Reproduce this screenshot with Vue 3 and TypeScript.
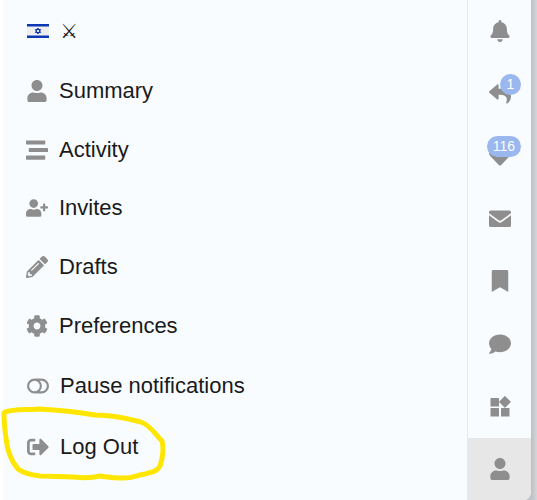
<script setup lang="ts">
interface IconShape {
  box: string
  d: string
}

interface MenuItem {
  label: string
  icon: string
}

interface RailItem {
  label: string
  icon: string
  badge?: string
  active?: boolean
}

const icons: Record<string, IconShape> = {
  user: {
    box: '-32 0 512 512',
    d: 'M224 256c70.7 0 128-57.3 128-128S294.7 0 224 0 96 57.3 96 128s57.3 128 128 128zm89.6 32h-16.7c-22.2 10.2-46.9 16-72.9 16s-50.6-5.8-72.9-16h-16.7C60.2 288 0 348.2 0 422.4V464c0 26.5 21.5 48 48 48h352c26.5 0 48-21.5 48-48v-41.6c0-74.2-60.2-134.4-134.4-134.4z',
  },
  stream: {
    box: '0 0 512 512',
    d: 'M16 128h416c8.8 0 16-7.2 16-16V48c0-8.8-7.2-16-16-16H16C7.2 32 0 39.2 0 48v64c0 8.8 7.2 16 16 16zm480 80H80c-8.8 0-16 7.2-16 16v64c0 8.8 7.2 16 16 16h416c8.8 0 16-7.2 16-16v-64c0-8.8-7.2-16-16-16zm-64 176H16c-8.8 0-16 7.2-16 16v64c0 8.8 7.2 16 16 16h416c8.8 0 16-7.2 16-16v-64c0-8.8-7.2-16-16-16z',
  },
  invite: {
    box: '0 -64 640 640',
    d: 'M624 208h-64v-64c0-8.8-7.2-16-16-16h-32c-8.8 0-16 7.2-16 16v64h-64c-8.8 0-16 7.2-16 16v32c0 8.8 7.2 16 16 16h64v64c0 8.8 7.2 16 16 16h32c8.8 0 16-7.2 16-16v-64h64c8.8 0 16-7.2 16-16v-32c0-8.8-7.2-16-16-16zM224 256c70.7 0 128-57.3 128-128S294.7 0 224 0 96 57.3 96 128s57.3 128 128 128zm89.6 32h-16.7c-22.2 10.2-46.9 16-72.9 16s-50.6-5.8-72.9-16h-16.7C60.2 288 0 348.2 0 422.4V464c0 26.5 21.5 48 48 48h352c26.5 0 48-21.5 48-48v-41.6c0-74.2-60.2-134.4-134.4-134.4z',
  },
  pencil: {
    box: '0 0 512 512',
    d: 'M497.9 142.1l-46.1 46.1c-4.7 4.7-12.3 4.7-17 0l-111-111c-4.7-4.7-4.7-12.3 0-17l46.1-46.1c18.7-18.7 49.1-18.7 67.9 0l60.1 60.1c18.8 18.7 18.8 49.1 0 67.9zM284.2 99.8L21.6 362.4.4 483.9c-2.9 16.4 11.4 30.6 27.8 27.8l121.5-21.3 262.6-262.6c4.7-4.7 4.7-12.3 0-17l-111-111c-4.8-4.7-12.4-4.7-17.1 0zM124.1 339.9c-5.5-5.5-5.5-14.3 0-19.8l154-154c5.5-5.5 14.3-5.5 19.8 0s5.5 14.3 0 19.8l-154 154c-5.5 5.5-14.3 5.5-19.8 0zM88 424h48v36.3l-64.5 11.3-31.1-31.1L51.7 376H88v48z',
  },
  cog: {
    box: '0 0 512 512',
    d: 'M487.4 315.7l-42.6-24.6c4.3-23.2 4.3-47 0-70.2l42.6-24.6c4.9-2.8 7.1-8.6 5.5-14-11.1-35.6-30-67.8-54.7-94.6-3.8-4.1-10-5.1-14.8-2.3L380.8 110c-17.9-15.4-38.5-27.3-60.8-35.1V25.8c0-5.6-3.9-10.5-9.4-11.7-36.7-8.2-74.3-7.8-109.2 0-5.5 1.2-9.4 6.1-9.4 11.7V75c-22.2 7.9-42.8 19.8-60.8 35.1L88.7 85.5c-4.9-2.8-11-1.9-14.8 2.3-24.7 26.7-43.6 58.9-54.7 94.6-1.7 5.4.6 11.2 5.5 14L67.3 221c-4.3 23.2-4.3 47 0 70.2l-42.6 24.6c-4.9 2.8-7.1 8.6-5.5 14 11.1 35.6 30 67.8 54.7 94.6 3.8 4.1 10 5.1 14.8 2.3l42.6-24.6c17.9 15.4 38.5 27.3 60.8 35.1v49.2c0 5.6 3.9 10.5 9.4 11.7 36.7 8.2 74.3 7.8 109.2 0 5.5-1.2 9.4-6.1 9.4-11.7v-49.2c22.2-7.9 42.8-19.8 60.8-35.1l42.6 24.6c4.9 2.8 11 1.9 14.8-2.3 24.7-26.7 43.6-58.9 54.7-94.6 1.5-5.5-.7-11.3-5.6-14.1zM256 336c-44.1 0-80-35.9-80-80s35.9-80 80-80 80 35.9 80 80-35.9 80-80 80z',
  },
  toggle: {
    box: '0 0 22 22',
    d: 'M7.5 3.5h7a7.5 7.5 0 0 1 0 15h-7a7.5 7.5 0 0 1 0-15zm0 2.2a5.3 5.3 0 0 0 0 10.6a5.3 5.3 0 0 0 0-10.6zm5.2 0a7.5 7.5 0 0 1 0 10.6h1.8a5.3 5.3 0 0 0 0-10.6z',
  },
  logout: {
    box: '0 0 512 512',
    d: 'M497 273L329 441c-15 15-41 4.5-41-17v-96H152c-13.3 0-24-10.7-24-24v-96c0-13.3 10.7-24 24-24h136V88c0-21.4 25.9-32 41-17l168 168c9.3 9.4 9.3 24.6 0 34zM192 436v-40c0-6.6-5.4-12-12-12H96c-17.7 0-32-14.3-32-32V160c0-17.7 14.3-32 32-32h84c6.6 0 12-5.4 12-12V76c0-6.6-5.4-12-12-12H96c-53 0-96 43-96 96v192c0 53 43 96 96 96h84c6.6 0 12-5.4 12-12z',
  },
  bell: {
    box: '-32 0 512 512',
    d: 'M224 512c35.3 0 63.9-28.6 63.9-64H160.1c0 35.4 28.6 64 63.9 64zm215.4-149.7c-19.3-20.8-55.5-52-55.5-154.3 0-77.7-54.5-139.9-127.9-155.2V32c0-17.7-14.3-32-32-32s-32 14.3-32 32v20.8C118.6 68.1 64.1 130.3 64.1 208c0 102.3-36.2 133.5-55.5 154.3-6 6.4-8.7 14.1-8.6 21.7.1 16.4 13 32 32.1 32h383.8c19.1 0 32-15.6 32.1-32 .1-7.6-2.6-15.3-8.6-21.7z',
  },
  reply: {
    box: '0 0 512 512',
    d: 'M8.3 189.8L184.3 37.9C199.7 24.5 224 35.3 224 56v80.1c160.6 1.8 288 34 288 186.2 0 61.4-39.6 122.3-83.3 154.1-13.7 10-33.1-2.5-28.1-18.6 45.3-145-21.5-183.5-176.6-185.7V360c0 20.7-24.3 31.5-39.7 18.2l-176-152c-11.1-9.6-11.1-26.8 0-36.4z',
  },
  heart: {
    box: '0 0 512 512',
    d: 'M462.3 62.6C407.5 15.9 326 24.3 275.7 76.2L256 96.5l-19.7-20.3C186.1 24.3 104.5 15.9 49.7 62.6c-62.8 53.6-66.1 149.8-9.9 207.9l193.5 199.8c12.5 12.9 32.8 12.9 45.3 0l193.5-199.8c56.3-58.1 53-154.3-9.8-207.9z',
  },
  envelope: {
    box: '0 0 22 22',
    d: 'M1.5 2.5h19A1.5 1.5 0 0 1 22 4v1.2L12 12.4a1.8 1.8 0 0 1-2 0L0 5.2V4a1.5 1.5 0 0 1 1.5-1.5zM0 7.2l9.2 6.8a3 3 0 0 0 3.6 0L22 7.2v10.3a1.5 1.5 0 0 1-1.5 1.5h-19A1.5 1.5 0 0 1 0 17.5z',
  },
  bookmark: {
    box: '-64 0 512 512',
    d: 'M0 512V32C0 14 14 0 32 0h320c18 0 32 14 32 32v480L192 400z',
  },
  comment: {
    box: '0 0 512 512',
    d: 'M256 32C114.6 32 0 125.1 0 240c0 49.6 21.4 95 57 130.7C44.5 421.1 2.7 466 2.2 466.5c-2.2 2.3-2.8 5.7-1.5 8.7S4.8 480 8 480c66.3 0 116-31.8 140.6-51.4 32.7 12.3 69 19.4 107.4 19.4 141.4 0 256-93.1 256-208S397.4 32 256 32z',
  },
  widgets: {
    box: '0 0 22 22',
    d: 'M2 3h7.5a.5.5 0 0 1 .5.5V11a.5.5 0 0 1-.5.5H2a.5.5 0 0 1-.5-.5V3.5A.5.5 0 0 1 2 3zm0 10h7.5a.5.5 0 0 1 .5.5V21a.5.5 0 0 1-.5.5H2a.5.5 0 0 1-.5-.5v-7.5A.5.5 0 0 1 2 13zm10.5 0H20a.5.5 0 0 1 .5.5V21a.5.5 0 0 1-.5.5h-7.5a.5.5 0 0 1-.5-.5v-7.5a.5.5 0 0 1 .5-.5zM16.3 1.3l5.3 5.2a.6.6 0 0 1 0 .8l-5.3 5.2a.6.6 0 0 1-.8 0l-5.2-5.2a.6.6 0 0 1 0-.8l5.2-5.2a.6.6 0 0 1 .8 0z',
  },
}

const profileItems: MenuItem[] = [
  { label: 'Summary', icon: 'user' },
  { label: 'Activity', icon: 'stream' },
  { label: 'Invites', icon: 'invite' },
  { label: 'Drafts', icon: 'pencil' },
  { label: 'Preferences', icon: 'cog' },
]

const railItems: RailItem[] = [
  { label: 'Notifications', icon: 'bell' },
  { label: 'Replies', icon: 'reply', badge: '1' },
  { label: 'Likes', icon: 'heart', badge: '116' },
  { label: 'Messages', icon: 'envelope' },
  { label: 'Bookmarks', icon: 'bookmark' },
  { label: 'Chat', icon: 'comment' },
  { label: 'Other', icon: 'widgets' },
  { label: 'Profile', icon: 'user', active: true },
]
</script>

<template>
  <div class="page">
    <main class="panel">
      <nav class="menu" aria-label="Profile">
        <button type="button" class="status">
          <svg class="flag" viewBox="0 0 22 14" aria-hidden="true">
            <rect width="22" height="14" fill="#eeeeee" />
            <rect width="22" height="2.5" fill="#0c38b8" />
            <rect y="11.5" width="22" height="2.5" fill="#0c38b8" />
            <path d="M11 4l2.6 4.500H8.400zM11 10L8.400 5.500h5.200z" fill="none" stroke="#0c38b8" />
          </svg>
          <span class="swords">⚔</span>
        </button>

        <ul class="list profile-list">
          <li v-for="item in profileItems" :key="item.label">
            <a class="item" href="#">
              <svg class="icon" :viewBox="icons[item.icon].box" aria-hidden="true">
                <path :d="icons[item.icon].d" />
              </svg>
              <span>{{ item.label }}</span>
            </a>
          </li>
        </ul>

        <ul class="list action-list">
          <li>
            <button type="button" class="item">
              <svg class="icon" :viewBox="icons.toggle.box" aria-hidden="true">
                <path :d="icons.toggle.d" fill-rule="evenodd" />
              </svg>
              <span>Pause notifications</span>
            </button>
          </li>
          <li class="marked">
            <button type="button" class="item">
              <svg class="icon" :viewBox="icons.logout.box" aria-hidden="true">
                <path :d="icons.logout.d" />
              </svg>
              <span>Log Out</span>
            </button>
            <svg class="marker" viewBox="0 0 170 74" aria-hidden="true">
              <path
                d="M5 6C12 3 28 4 39 3C60 4 78 6 95 9C112 9 130 13 141 16C150 19 155 28 162 35C164 43 163 51 160 60C156 67 150 66 145 68C136 69 134 72 124 72C114 72 108 71 100 70C92 72 82 72 74 71L40 70C31 69 22 66 18 63C11 55 7 43 6 32Q4 18 4 7"
              />
            </svg>
          </li>
        </ul>
      </nav>

      <div class="rail" role="tablist" aria-label="Sections">
        <button
          v-for="item in railItems"
          :key="item.label"
          type="button"
          role="tab"
          class="tab"
          :class="{ active: item.active }"
          :aria-label="item.label"
          :aria-selected="item.active ? 'true' : 'false'"
        >
          <svg class="icon" :viewBox="icons[item.icon].box" aria-hidden="true">
            <path :d="icons[item.icon].d" />
          </svg>
          <span v-if="item.badge" class="badge">{{ item.badge }}</span>
        </button>
      </div>
    </main>
    <div class="edge"></div>
  </div>
</template>

<style>
body {
  margin: 0;
}
</style>

<style scoped>
.page {
  box-sizing: border-box;
  min-height: 100vh;
  display: flex;
  padding-left: 3px;
  background: linear-gradient(to left, #c4c5c9 20px, #ffffff 20px);
  font-family: "Liberation Sans", Arial, sans-serif;
  font-size: 22px;
  line-height: 28px;
  color: #1a1a1a;
}

.panel {
  flex: 1;
  display: flex;
  background: #f9fcff;
  border-bottom-right-radius: 8px;
}

.edge {
  width: 6px;
  background: linear-gradient(to right, #bfbfc3, #d3d6da);
}

.menu {
  flex: 1;
}

button {
  border: 0;
  margin: 0;
  background: none;
  font: inherit;
  color: inherit;
  text-align: left;
  cursor: pointer;
}

.status {
  display: flex;
  align-items: center;
  gap: 11px;
  width: 100%;
  height: 62px;
  padding: 0 24px;
}

.flag {
  width: 22px;
  height: 14px;
}

.swords {
  font-family: "DejaVu Sans", sans-serif;
  font-size: 20px;
}

.list {
  margin: 0;
  padding: 0;
  list-style: none;
  display: grid;
  grid-auto-rows: 1fr;
}

.profile-list {
  height: 293px;
}

.action-list {
  height: 122px;
}

.item {
  box-sizing: border-box;
  display: flex;
  align-items: center;
  gap: 11px;
  width: 100%;
  height: 100%;
  padding: 0 23px;
  color: inherit;
  text-decoration: none;
}

.action-list .item {
  padding: 0 24px;
}

.icon {
  flex: none;
  width: 22px;
  height: 22px;
  fill: #8e8e8e;
}

.marked {
  position: relative;
}

.marker {
  position: absolute;
  left: -3px;
  top: -10px;
  width: 170px;
  height: 74px;
  overflow: visible;
  pointer-events: none;
  fill: none;
  stroke: #ffe600;
  stroke-width: 5;
  stroke-linecap: round;
  stroke-linejoin: round;
}

.rail {
  display: grid;
  grid-auto-rows: 1fr;
  width: 63px;
  border-left: 1px solid #e6e8ea;
}

.tab {
  position: relative;
  display: flex;
  align-items: center;
  justify-content: center;
  padding: 0;
}

.tab.active {
  background: #e7e7e7;
  border-bottom-right-radius: 8px;
}

.badge {
  position: absolute;
  top: 11px;
  right: 10px;
  box-sizing: border-box;
  min-width: 21px;
  padding: 0 6px;
  border-radius: 11px;
  background: #9ab7ee;
  color: #ffffff;
  font-size: 14px;
  line-height: 21px;
  text-align: center;
}
</style>
